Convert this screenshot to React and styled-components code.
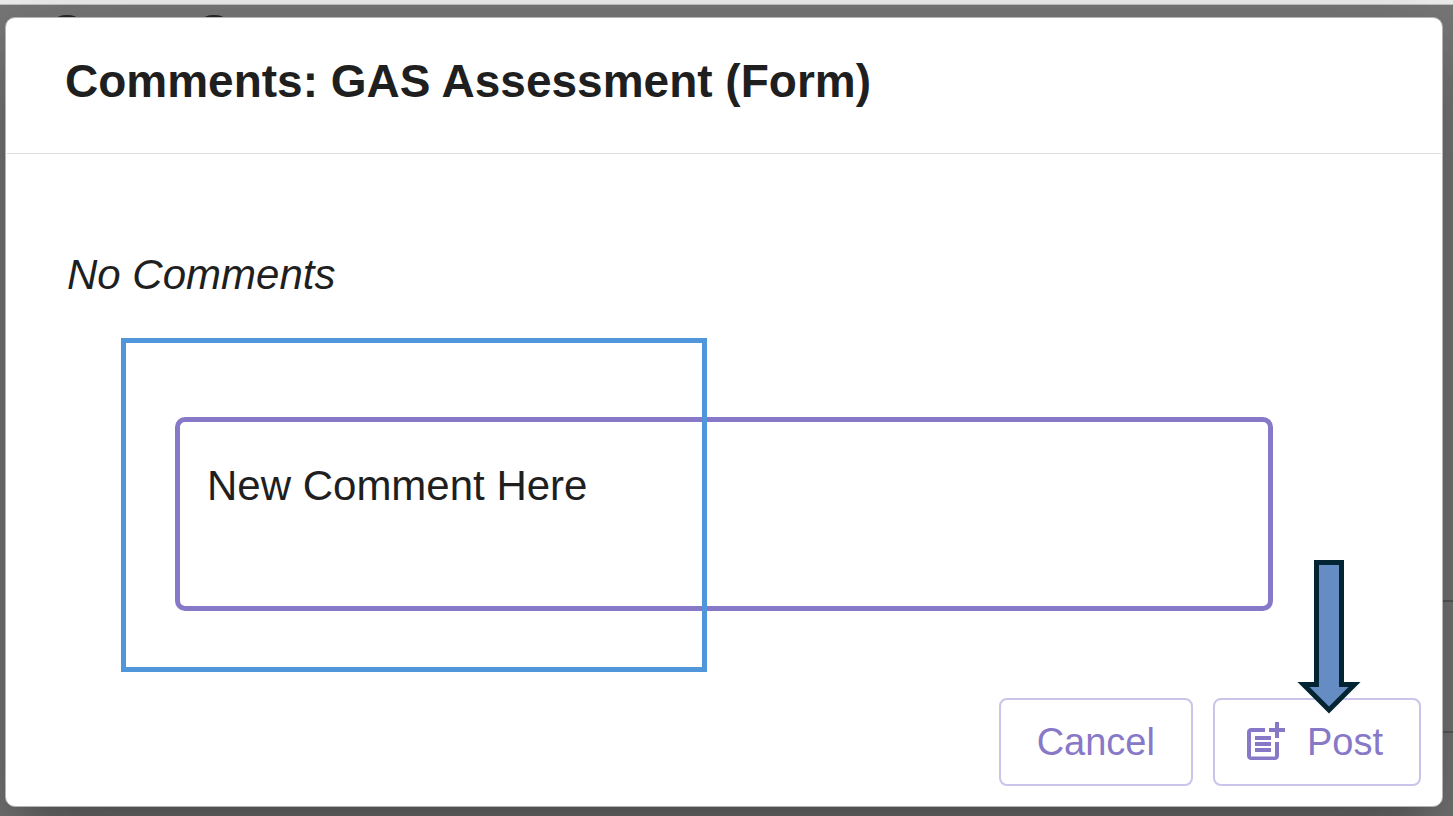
import React, {useState} from 'react';
import styled, {createGlobalStyle} from 'styled-components';
import {MdOutlinePostAdd} from 'react-icons/md';

const purple = '#8878c8';

const GlobalStyle = createGlobalStyle`
* {
    box-sizing: border-box;
}
body {
    margin: 0;
    font-family: "Liberation Sans", Arial, sans-serif;
    color: #1f1f1f;
}
`;

const Page = styled.div`
display: flex;
flex-direction: column;
min-height: 100vh;
background-color: #787878;
overflow: hidden;
`;

const TopBar = styled.div`
height: 5px;
background-color: #f0f0f0;
border-bottom: 1px solid #c4c4c4;
`;

const Backdrop = styled.div`
position: relative;
flex: 1;
padding: 12px 10px 10px 5px;
`;

// what shows of the dimmed page around the dialog
const Behind = styled.div`
position: absolute;
inset: 0;
display: flex;
flex-direction: column;
justify-content: space-between;
padding-top: 10px;
`;

const HiddenHeading = styled.div`
display: flex;
gap: 125px;
padding-left: 56px;
`;

const HiddenLetter = styled.span`
width: 22px;
height: 4px;
border-radius: 50% 50% 0 0 / 100% 100% 0 0;
background-color: #262626;
`;

const HiddenRow = styled.div`
height: 133px;
margin: 0 0 84px 40px;
border: solid #5c5c5c;
border-width: 2px 0;
`;

const Dialog = styled.section`
position: relative;
background-color: white;
border: 1px solid #b4b4b4;
border-radius: 10px;
box-shadow: 0px 28px 40px -18px rgba(0, 0, 0, 0.2),
    0px 60px 96px 8px rgba(0, 0, 0, 0.14),
    0px 24px 116px 20px rgba(0, 0, 0, 0.12);
`;

const DialogHeader = styled.header`
margin: 0 1px;
padding: 35px 58px 44px;
border-bottom: 1px solid #dcdcdc;
`;

const DialogTitle = styled.h1`
margin: 0;
font-size: 46px;
line-height: 56px;
font-weight: bold;
`;

const DialogContent = styled.div`
padding: 97px 61px 87px;
`;

const EmptyMessage = styled.p`
margin: 0 0 118px;
font-size: 42px;
line-height: 48px;
font-style: italic;
`;

const CommentField = styled.div`
position: relative;
margin: 0 108px;
`;

const CommentInput = styled.textarea`
display: block;
width: 100%;
height: 194px;
padding: 40px 27px;
border: 5px solid ${purple};
border-radius: 10px;
outline: none;
resize: none;
background-color: white;
color: inherit;
font-family: inherit;
font-size: 42px;
line-height: 48px;
`;

const Highlight = styled.div`
position: absolute;
top: -79px;
left: -54px;
width: 586px;
height: 334px;
border: 5px solid #4f96db;
pointer-events: none;
`;

const DialogFooter = styled.footer`
display: flex;
justify-content: flex-end;
gap: 20px;
padding: 0 21px 20px;
`;

const DialogButton = styled.button`
display: flex;
align-items: center;
gap: 18px;
height: 88px;
padding: ${({$icon}) => $icon ? '0 36px 0 26px' : '0 36px'};
border: 2px solid #cbc3ea;
border-radius: 8px;
background-color: white;
color: ${purple};
font-family: inherit;
font-size: 38px;
line-height: 48px;
cursor: pointer;
`;

const PostArea = styled.div`
position: relative;
`;

const ArrowSvg = styled.svg`
position: absolute;
top: -138px;
left: 84px;
pointer-events: none;
`;

function Arrow(){
    return (
        <ArrowSvg width="64" height="156" viewBox="0 0 64 156" aria-hidden="true">
            <path
                d="M19.5 2.5H44.5V124.5H57.5L32 150L6.5 124.5H19.5Z"
                fill="#668cc4"
                stroke="#032433"
                strokeWidth="5"
            />
        </ArrowSvg>
    );
}

export default function App(){
    const [comment, setComment] = useState('New Comment Here');

    const handleChange = event => {
        setComment(event.target.value);
    };

    return (
        <>
        <GlobalStyle/>
        <Page>
            <TopBar/>
            <Backdrop>
                <Behind aria-hidden="true">
                    <HiddenHeading>
                        <HiddenLetter/>
                        <HiddenLetter/>
                    </HiddenHeading>
                    <HiddenRow/>
                </Behind>
                <Dialog role="dialog" aria-labelledby="dialog-title">
                    <DialogHeader>
                        <DialogTitle id="dialog-title">Comments: GAS Assessment (Form)</DialogTitle>
                    </DialogHeader>
                    <DialogContent>
                        <EmptyMessage>No Comments</EmptyMessage>
                        <CommentField>
                            <CommentInput
                                aria-label="New comment"
                                value={comment}
                                onChange={handleChange}
                            />
                            <Highlight/>
                        </CommentField>
                    </DialogContent>
                    <DialogFooter>
                        <DialogButton type="button">Cancel</DialogButton>
                        <PostArea>
                            <DialogButton type="button" $icon>
                                <MdOutlinePostAdd size={48}/>
                                Post
                            </DialogButton>
                            <Arrow/>
                        </PostArea>
                    </DialogFooter>
                </Dialog>
            </Backdrop>
        </Page>
        </>
    );
}
